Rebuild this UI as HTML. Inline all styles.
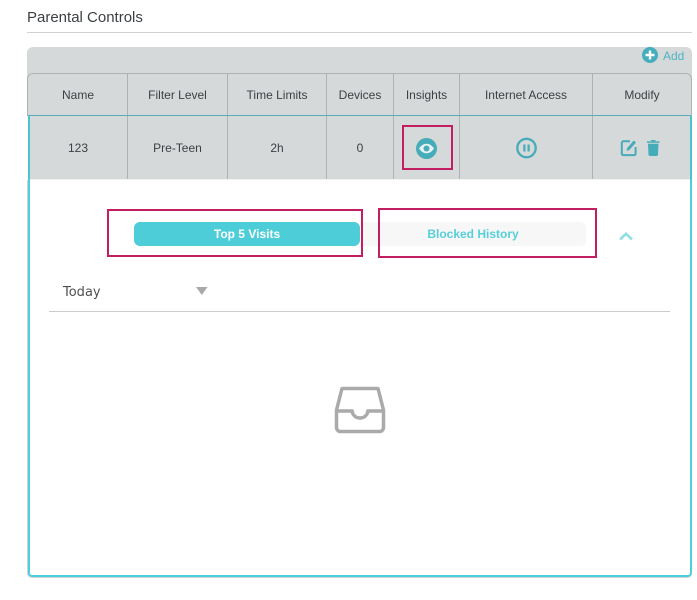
<!DOCTYPE html>
<html><head><meta charset="utf-8">
<style>
html,body{margin:0;padding:0;background:#fff;}
body{width:697px;height:600px;position:relative;overflow:hidden;font-family:"Liberation Sans",sans-serif;color:#3c3f43;}
.a{position:absolute;}
.t{position:absolute;text-align:center;font-size:12px;line-height:14px;white-space:nowrap;}
.v{position:absolute;width:1px;background:#aeb2b3;}
.p{position:absolute;border:2px solid #c41e63;box-sizing:border-box;}
</style></head>
<body>
<div class="t" style="left:27px;top:9px;font-size:15px;line-height:18px;text-align:left;">Parental Controls</div>
<div class="a" style="left:27px;top:32px;width:665px;height:1px;background:#cfd1d2;"></div>

<div class="a" style="left:27px;top:47px;width:665px;height:69px;background:#d6d9da;border-radius:6px 6px 0 0;"></div>
<div class="a" style="left:28px;top:116px;width:663px;height:64px;background:#d6d9da;"></div>
<div class="a" style="left:27px;top:73px;width:665px;height:43px;box-sizing:border-box;border:1px solid #aeb2b3;border-bottom:0;border-radius:6px 6px 0 0;"></div>

<svg class="a" style="left:642px;top:47px" width="16" height="16" viewBox="0 0 16 16"><circle cx="8" cy="8" r="8" fill="#45aebc"/><path d="M8 3.500v9M3.500 8h9" stroke="#fff" stroke-width="2.400"/></svg>
<div class="t" style="left:663px;top:49px;color:#4db4c2;text-align:left;">Add</div>

<div class="v" style="left:127px;top:73px;height:106px;"></div>
<div class="v" style="left:227px;top:73px;height:106px;"></div>
<div class="v" style="left:326px;top:73px;height:106px;"></div>
<div class="v" style="left:393px;top:73px;height:106px;"></div>
<div class="v" style="left:459px;top:73px;height:106px;"></div>
<div class="v" style="left:592px;top:73px;height:106px;"></div>

<div class="a" style="left:28px;top:115px;width:663px;height:1px;background:#57aeb9;"></div>
<div class="a" style="left:28px;top:179px;width:663px;height:1px;background:#f0f1f1;"></div>

<div class="t" style="left:28px;top:88px;width:100px;">Name</div>
<div class="t" style="left:128px;top:88px;width:99px;">Filter Level</div>
<div class="t" style="left:228px;top:88px;width:98px;">Time Limits</div>
<div class="t" style="left:327px;top:88px;width:66px;">Devices</div>
<div class="t" style="left:394px;top:88px;width:65px;">Insights</div>
<div class="t" style="left:460px;top:88px;width:132px;">Internet Access</div>
<div class="t" style="left:593px;top:88px;width:98px;">Modify</div>

<div class="t" style="left:28px;top:141px;width:100px;">123</div>
<div class="t" style="left:128px;top:141px;width:99px;">Pre-Teen</div>
<div class="t" style="left:228px;top:141px;width:98px;">2h</div>
<div class="t" style="left:327px;top:141px;width:66px;">0</div>

<svg class="a" style="left:416px;top:138px" width="21" height="21" viewBox="0 0 21 21"><circle cx="10.500" cy="10.500" r="10.500" fill="#46acb9"/><path d="M3 10.500C5.200 7.200 7.800 5.700 10.500 5.700s5.300 1.500 7.500 4.800c-2.200 3.300-4.800 4.800-7.500 4.800S5.200 13.800 3 10.500z" fill="#e6f3f5"/><circle cx="10.500" cy="10.500" r="3" fill="#46acb9"/></svg>

<svg class="a" style="left:516px;top:137px" width="21" height="22" viewBox="0 0 21 22"><circle cx="10.500" cy="11" r="9.200" fill="none" stroke="#46acb9" stroke-width="2.300"/><path d="M8.400 7.500v7M12.600 7.500v7" stroke="#46acb9" stroke-width="2.200"/></svg>

<svg class="a" style="left:620px;top:139px" width="18" height="18" viewBox="0 0 18 18"><path d="M10 2.300H3.300A1.600 1.600 0 0 0 1.800 3.900v10.700a1.600 1.600 0 0 0 1.500 1.500h10.800a1.600 1.600 0 0 0 1.500-1.500V8" fill="none" stroke="#46acb9" stroke-width="2"/><path d="M6.500 11.800l.6-2.700 6.600-7.600 2.300 2-6.700 7.600z" fill="#46acb9"/></svg>

<svg class="a" style="left:646px;top:139px" width="14" height="18" viewBox="0 0 14 18"><path d="M1 2.300h12.500v1.500H1z" fill="#46acb9"/><path d="M5 2.300V1h4.500v1.300z" fill="#46acb9"/><path d="M2 4.800h10.500l-.5 11a1.400 1.400 0 0 1-1.400 1.200H3.900a1.400 1.400 0 0 1-1.400-1.200z" fill="#46acb9"/></svg>

<div class="a" style="left:27px;top:180px;width:665px;height:398px;box-sizing:border-box;border-left:1px solid #cfd1d2;border-bottom:1px solid #cfd1d2;border-radius:0 0 5px 5px;"></div>
<div class="a" style="left:28px;top:180px;width:664px;height:397px;box-sizing:border-box;border:2px solid #4dd0da;border-top:0;border-radius:0 0 4px 4px;"></div>
<div class="a" style="left:28px;top:116px;width:2px;height:64px;background:#4cc5d0;"></div>
<div class="a" style="left:690px;top:116px;width:2px;height:64px;background:#4cc5d0;"></div>

<div class="a" style="left:360px;top:222px;width:226px;height:24px;background:#f7f7f7;border-radius:0 6px 6px 0;"></div>
<div class="a" style="left:134px;top:222px;width:226px;height:24px;background:#4dcdd8;border-radius:6px;"></div>
<div class="t" style="left:134px;top:227px;width:226px;color:#fff;font-weight:bold;">Top 5 Visits</div>
<div class="t" style="left:360px;top:227px;width:226px;color:#55cfdb;font-weight:bold;">Blocked History</div>

<div class="p" style="left:107px;top:209px;width:256px;height:48px;"></div>
<div class="p" style="left:378px;top:208px;width:219px;height:50px;"></div>
<div class="p" style="left:402px;top:125px;width:51px;height:45px;"></div>

<svg class="a" style="left:618px;top:231px" width="16" height="10" viewBox="0 0 16 10"><path d="M2 8.500L8 2.800l6 5.700" fill="none" stroke="#8fdfe6" stroke-width="2.600"/></svg>

<div class="t" style="left:63px;top:285px;font-family:'DejaVu Sans',sans-serif;font-size:13px;line-height:15px;text-align:left;color:#505050;">Today</div>
<svg class="a" style="left:196px;top:287px" width="12" height="8" viewBox="0 0 12 8"><path d="M0 0h11.500L5.800 8z" fill="#a9a9a9"/></svg>
<div class="a" style="left:49px;top:311px;width:621px;height:1px;background:#cbcbcb;"></div>

<svg class="a" style="left:333px;top:385px" width="54" height="50" viewBox="0 0 54 50"><path d="M9 3.500h36L50.500 25v17.500a4 4 0 0 1-4 4H7.500a4 4 0 0 1-4-4V25z" fill="none" stroke="#aaaaac" stroke-width="3.500" stroke-linejoin="round"/><path d="M3.500 26H19c.8 4.500 4 7 8 7s7.200-2.500 8-7h15.500" fill="none" stroke="#aaaaac" stroke-width="3.500"/></svg>
</body></html>
